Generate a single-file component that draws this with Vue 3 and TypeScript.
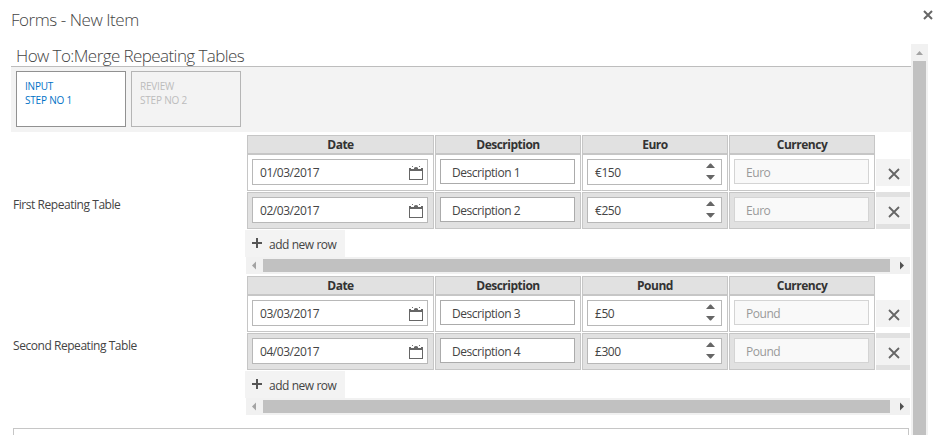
<script setup lang="ts">
interface Row {
  date: string
  description: string
  amount: string
  currency: string
}
interface RepeatingTable {
  label: string
  unit: string
  rows: Row[]
}

const steps = [
  { name: 'INPUT', label: 'STEP NO 1', active: true },
  { name: 'REVIEW', label: 'STEP NO 2', active: false },
]

const tables: RepeatingTable[] = [
  {
    label: 'First Repeating Table',
    unit: 'Euro',
    rows: [
      { date: '01/03/2017', description: 'Description 1', amount: '€150', currency: 'Euro' },
      { date: '02/03/2017', description: 'Description 2', amount: '€250', currency: 'Euro' },
    ],
  },
  {
    label: 'Second Repeating Table',
    unit: 'Pound',
    rows: [
      { date: '03/03/2017', description: 'Description 3', amount: '£50', currency: 'Pound' },
      { date: '04/03/2017', description: 'Description 4', amount: '£300', currency: 'Pound' },
    ],
  },
]
</script>

<template>
  <div class="dialog">
    <header class="dialog-head">
      <h1 class="dialog-title">Forms - New Item</h1>
      <svg class="close" width="10" height="10" viewBox="0 0 10 10">
        <path d="M1 1L9 9M9 1L1 9" fill="none" stroke="#666" stroke-width="2" />
      </svg>
    </header>

    <div class="viewport">
      <main class="form">
        <h2 class="form-title"><span>How To:Merge Repeating Tables</span></h2>
        <nav class="steps">
          <div v-for="s in steps" :key="s.name" class="step" :class="{ active: s.active }">
            <div>{{ s.name }}</div>
            <div>{{ s.label }}</div>
          </div>
        </nav>

        <section v-for="t in tables" :key="t.label" class="field">
          <div class="field-label">{{ t.label }}</div>
          <div class="field-body">
            <div class="grid head">
              <div class="th">Date</div>
              <div class="th">Description</div>
              <div class="th">{{ t.unit }}</div>
              <div class="th">Currency</div>
            </div>
            <div v-for="r in t.rows" :key="r.date" class="grid row">
              <div class="td">
                <div class="input tall">
                  <span class="digits">{{ r.date }}</span>
                  <svg class="calendar" width="14" height="14" viewBox="0 0 14 14">
                    <path d="M0 2H2V3H5V2H9V3H12V2H14V14H0ZM1 5V13H13V5Z" fill="#666" fill-rule="evenodd" />
                    <path d="M3 0H4V1H3ZM10 0H11V1H10ZM5.5 1H8.5V2H5.5Z" fill="#777" />
                  </svg>
                </div>
              </div>
              <div class="td">
                <div class="input text"><span>{{ r.description }}</span></div>
              </div>
              <div class="td">
                <div class="input tall">
                  <span class="digits">{{ r.amount }}</span>
                  <svg class="spinner" width="9" height="17" viewBox="0 0 9 17">
                    <path d="M0 5H9L5 .5H4ZM0 12H9L5 16.5H4Z" fill="#666" />
                  </svg>
                </div>
              </div>
              <div class="td">
                <div class="input text disabled"><span>{{ r.currency }}</span></div>
              </div>
              <div class="remove-cell">
                <div class="remove">
                  <svg width="12" height="12" viewBox="0 0 12 12">
                    <path d="M1 1L11 11M11 1L1 11" fill="none" stroke="#666" stroke-width="1.8" />
                  </svg>
                </div>
              </div>
            </div>
            <div class="add">
              <svg width="10" height="10" viewBox="0 0 10 10">
                <path d="M5 0V10M0 5H10" fill="none" stroke="#555" stroke-width="2" />
              </svg>
              <span>add new row</span>
            </div>
            <div class="hscroll">
              <svg width="17" height="17" viewBox="0 0 17 17"><path d="M10 4.5V12.5L6 8.5Z" fill="#a3a3a3" /></svg>
              <div class="hthumb"></div>
              <svg width="20" height="17" viewBox="0 0 20 17"><path d="M10 4.5V12.5L14 8.5Z" fill="#505050" /></svg>
            </div>
          </div>
        </section>

        <div class="panel"></div>
      </main>

      <aside class="vscroll">
        <svg width="17" height="17" viewBox="0 0 17 17"><path d="M5 11H12L8.5 7Z" fill="#a3a3a3" /></svg>
        <div class="vthumb"></div>
      </aside>
    </div>
  </div>
</template>

<style>
body {
  margin: 0;
  background: #fff;
  overflow: hidden;
}
</style>

<style scoped>
.dialog {
  box-sizing: border-box;
  width: 942px;
  height: 435px;
  overflow: hidden;
  background: #fff;
  color: #444;
  font: 12px/16px 'Open Sans', 'Noto Sans', sans-serif;
  letter-spacing: -0.45px;
  white-space: nowrap;
}
.dialog * {
  box-sizing: border-box;
}
.dialog-head {
  display: flex;
  justify-content: space-between;
  height: 44px;
  padding: 10px 9px 0 11px;
}
.dialog-title,
.form-title {
  margin: 0;
  font-size: 17px;
  line-height: 20px;
  font-weight: 300;
  letter-spacing: -0.45px;
}
.close {
  display: block;
}
.viewport {
  display: flex;
  height: 391px;
  padding-left: 11px;
}
.form {
  width: 900px;
  overflow: hidden;
}
.form-title {
  height: 23px;
  padding: 2px 0 0 5px;
  border-bottom: 1px solid #bdbdbd;
  letter-spacing: -0.58px;
}
.steps {
  display: flex;
  gap: 5px;
  height: 65px;
  padding: 4px 5px 5px;
  background: #f3f3f3;
}
.step {
  width: 110px;
  padding: 7px 8px;
  border: 1px solid #b5b5b5;
  color: #bcbcbc;
  font-size: 10px;
  line-height: 14px;
  letter-spacing: -0.2px;
}
.step.active {
  background: #fff;
  border-color: #919191;
  color: #0072c6;
}
.field {
  display: flex;
  height: 141px;
  padding-top: 3px;
}
.field-label {
  width: 234px;
  padding: 62px 0 0 2px;
}
.field-body {
  width: 665px;
}
.grid {
  display: grid;
  grid-template-columns: 187px 146px 146px 146px 34px;
  column-gap: 1px;
  margin: 0 0 1px 2px;
}
.head {
  height: 18px;
}
.th {
  border: 1px solid #c6c6c6;
  background: #e1e1e1;
  color: #333;
  font-weight: 700;
  line-height: 17px;
  letter-spacing: -0.5px;
  text-align: center;
}
.row {
  height: 37px;
}
.td {
  padding: 4px;
  border: 1px solid #c6c6c6;
}
.remove-cell {
  padding: 5px 0;
}
.row:nth-child(odd) .td,
.row:nth-child(odd) .remove-cell {
  background: #e1e1e1;
}
.input {
  display: flex;
  justify-content: space-between;
  width: 135px;
  height: 25px;
  border: 1px solid #ababab;
  background: #fff;
  line-height: 26px;
}
.input.tall {
  height: 26px;
  padding: 0 5px 0 7px;
  border-color: #b8b8b8;
  line-height: 25px;
}
.td:first-child .input {
  width: 176px;
  padding-right: 4px;
}
.input.text {
  padding-left: 11px;
}
.input.disabled {
  border-color: #d4d4d4;
  background: #f9f9f9;
  color: #999;
}
.calendar {
  margin-top: 6px;
}
.spinner {
  margin: 3px 1px 0 0;
}
.remove {
  display: flex;
  justify-content: center;
  height: 27px;
  padding: 9px 0 0 2px;
  background: #f3f3f3;
}
.remove svg {
  display: block;
}
.add {
  display: flex;
  gap: 7px;
  width: 100px;
  height: 27px;
  padding: 8px 0 0 7px;
  background: #f3f3f3;
  line-height: 14px;
}
.hscroll {
  display: flex;
  align-items: center;
  height: 17px;
  margin-left: 1px;
  background: #f1f1f1;
}
.hthumb {
  flex: 1;
  height: 13px;
  background: #c1c1c1;
}
.panel {
  width: 896px;
  height: 40px;
  margin: 14px 0 0 2px;
  border: 1px solid #c6c6c6;
}
.vscroll {
  display: flex;
  flex-direction: column;
  align-items: center;
  width: 17px;
  background: #f1f1f1;
}
.vthumb {
  flex: 1;
  width: 13px;
  background: #c1c1c1;
}
</style>
